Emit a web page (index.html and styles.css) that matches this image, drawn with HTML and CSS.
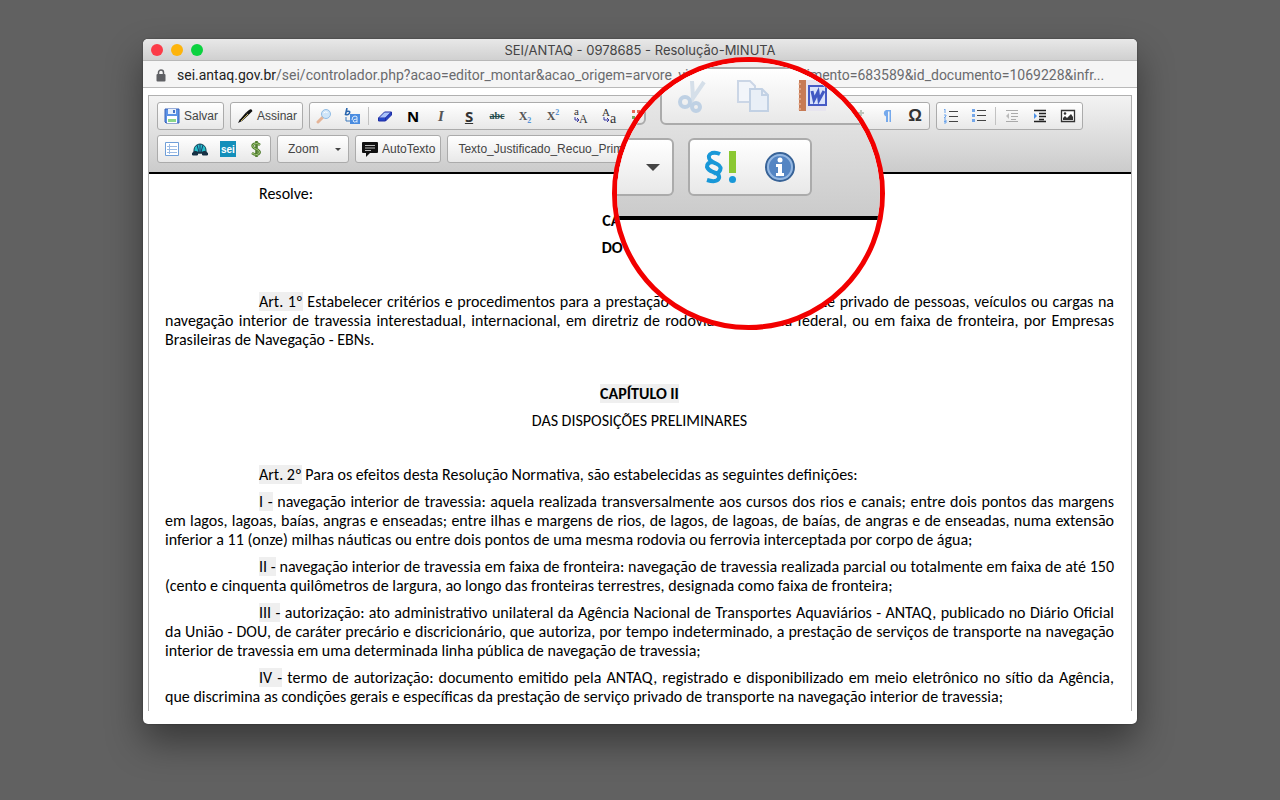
FILE: index.html
```html
<!DOCTYPE html>
<html lang="pt-BR">
<head>
<meta charset="utf-8">
<title>SEI/ANTAQ - 0978685 - Resolução-MINUTA</title>
<link rel="stylesheet" href="styles.css">
</head>
<body>
<main class="window">
  <header class="titlebar">
    <div class="lights"><span class="light red"></span><span class="light yellow"></span><span class="light green"></span></div>
    <h1 class="title">SEI/ANTAQ - 0978685 - Resolução-MINUTA</h1>
  </header>
  <div class="address">
    <svg class="lock" width="10" height="13" viewBox="0 0 10 13"><path d="M2.500 6V3.500a2.500 2.500 0 0 1 5 0V6" fill="none" stroke="#5f6064" stroke-width="1.500"/><rect x="0.500" y="5" width="9" height="7.500" rx="1" fill="#5f6064"/></svg>
    <span class="url"><span class="host">sei.antaq.gov.br</span>/sei/controlador.php?acao=editor_montar&amp;acao_origem=arvore_visualizar&amp;id_procedimento=683589&amp;id_documento=1069228&amp;infr...</span>
  </div>
  <div class="editor">
    <div class="toolbar">
      <div class="tools">
        <button class="group labelled" type="button"><svg width="16" height="16" viewBox="0 0 16 16"><path d="M1 1h14v14H2l-1-1z" fill="#5c93e6" stroke="#3a62b8"/><path d="M4 1h8v5H4z" fill="#e9f1fd"/><path d="M9 2h2v3H9z" fill="#4673c8"/><path d="M3 8h10v7H3z" fill="#fff"/><path d="M4 11h8v3H4z" fill="#8bd68b"/></svg>Salvar</button>
        <button class="group labelled" type="button"><svg width="16" height="16" viewBox="0 0 16 16"><path d="M1 15l2-4 2 2zM3 11.500l6-7L11.500 7 5 13z" fill="#111"/><path d="M9 4.500L12 2q2-1.500 3 0t-.5 2L11.500 7z" fill="#111"/><path d="M4 13L11 6" stroke="#c2ad58"/></svg>Assinar</button>
        <div class="group">
          <button class="tool" type="button" aria-label="Localizar"><svg width="16" height="16" viewBox="0 0 16 16"><path d="M2 14l5-5" stroke="#e5b497" stroke-width="3" stroke-linecap="round"/><circle cx="10" cy="6" r="4.500" fill="#cfe5f8" stroke="#91bde5"/><path d="M7.500 5q2-2 4-.5" stroke="#fff" fill="none"/></svg></button>
          <button class="tool" type="button" aria-label="Substituir"><svg width="16" height="16" viewBox="0 0 16 16"><path d="M3 0L1.500 6.500q3 1 4-1.500T2.500 3.500" fill="none" stroke="#2865ae" stroke-width="1.600"/><path d="M2 9v4h4" fill="none" stroke="#3b78bd"/><path d="M6 6h10v10H6z" fill="#4a8ce0"/><path d="M8 12q0-4 3-4t2 3v3.500M13 11q-4 0-4 2t4 .5" fill="none" stroke="#d9e9fc"/></svg></button>
          <span class="rule"></span>
          <button class="tool" type="button" aria-label="Remover formatação"><svg width="16" height="16" viewBox="0 0 16 16"><path d="M1.500 10l6-6h7l-6 6z" fill="#a9c3fa" stroke="#202ea5"/><path d="M1.500 10v3h7v-3M8.500 13l6-6V4l-6 6z" fill="#2447c8" stroke="#202ea5"/></svg></button>
          <button class="tool bold" type="button" aria-label="Negrito">N</button>
          <button class="tool italic" type="button" aria-label="Itálico">I</button>
          <button class="tool underline" type="button" aria-label="Sublinhado">S</button>
          <button class="tool strike" type="button" aria-label="Tachado">abc</button>
          <button class="tool script" type="button" aria-label="Subscrito"><span>X<sub>2</sub></span></button>
          <button class="tool script" type="button" aria-label="Sobrescrito"><span>X<sup>2</sup></span></button>
          <button class="tool" type="button" aria-label="Maiúsculas"><svg class="letters" width="16" height="16" viewBox="0 0 16 16"><g fill="#333"><text x="1" y="7" font-size="11">a</text><text x="6" y="15" font-size="12">A</text></g><path d="M2 9v3h4M4 10l2 2-2 2" fill="none" stroke="#3535a0"/></svg></button>
          <button class="tool" type="button" aria-label="Minúsculas"><svg class="letters" width="16" height="16" viewBox="0 0 16 16"><g fill="#333"><text x="1" y="8" font-size="11">A</text><text x="9" y="15" font-size="14">a</text></g><path d="M3 9v3h5M6 10l2 2-2 2" fill="none" stroke="#3535a0"/></svg></button>
          <button class="tool" type="button" aria-label="Cor"><svg width="16" height="16" viewBox="0 0 16 16"><path d="M3 2h3v3H3zM8 2h3v3H8z" fill="#e76855"/><path d="M3 8h3v3H3z" fill="#72a55c"/></svg></button>
        </div>
        <div class="group wide">
          <button class="tool" type="button" aria-label="Limpar"><svg width="16" height="16" viewBox="0 0 16 16"><path d="M10 2v6M7 5h6" stroke="#bcc5bb" stroke-width="2"/></svg></button>
          <button class="tool" type="button" aria-label="Mostrar blocos"><svg width="16" height="16" viewBox="0 0 16 16"><path d="M7 8.500A3.500 3.500 0 0 1 7 2h5v12h-1.500V3.500H9V14H7z" fill="#75a9ec"/></svg></button>
          <button class="tool omega" type="button" aria-label="Símbolo">Ω</button>
        </div>
        <div class="group">
          <button class="tool" type="button" aria-label="Lista numerada"><svg width="16" height="16" viewBox="0 0 16 16"><path d="M6 3.500h9M6 8.500h9M6 13.500h9" stroke="#444"/><path d="M1 2l1-1v4M1 7h2v1L1 10h2M1 12h2v3H1M1 13.500h2" fill="none" stroke="#6ba4ec"/></svg></button>
          <button class="tool" type="button" aria-label="Lista"><svg width="16" height="16" viewBox="0 0 16 16"><path d="M6 2.500h9M6 7.500h9M6 12.500h9" stroke="#444"/><path d="M1 1h3v3H1zM1 6h3v3H1zM1 11h3v3H1z" fill="#74a7ea"/></svg></button>
          <span class="rule"></span>
          <button class="tool" type="button" aria-label="Diminuir recuo"><svg width="16" height="16" viewBox="0 0 16 16"><path d="M2 2.500h12M7 5.500h7M7 8.500h7M7 11.500h5M2 13.500h12" stroke="#aaa"/><path d="M5 5v6L2 8z" fill="#bbb"/></svg></button>
          <button class="tool" type="button" aria-label="Aumentar recuo"><svg width="16" height="16" viewBox="0 0 16 16"><path d="M2 2.500h12M7 5.500h7M7 8.500h7M7 11.500h5M2 13.500h12" stroke="#222" stroke-width="1.300"/><path d="M2 5v6l3-3z" fill="#4b8fe5"/></svg></button>
          <button class="tool" type="button" aria-label="Imagem"><svg width="16" height="16" viewBox="0 0 16 16"><path d="M1.500 2.500h13v11h-13z" fill="#fff" stroke="#333" stroke-width="1.300"/><circle cx="5" cy="5.500" r="1.300" fill="#333"/><path d="M3 12V10l2-2 2 2 4-4 2 3v3z" fill="#333"/></svg></button>
        </div>
      </div>
      <div class="tools">
        <div class="group">
          <button class="tool" type="button" aria-label="Tabela"><svg width="16" height="16" viewBox="0 0 16 16"><path d="M1.500 1.500h13v13h-13z" fill="#fff" stroke="#6f9ed8"/><path d="M3 5.500h10M3 8.500h10M3 11.500h10M5.500 3v10" stroke="#9bbbe4"/></svg></button>
          <button class="tool" type="button" aria-label="Link"><svg width="16" height="16" viewBox="0 0 16 16"><path d="M2 9a6 6 0 0 1 12 0v3H2z" fill="#25bfca" stroke="#104556"/><path d="M8 3v7M5 4l2 7M11 4l-2 7" stroke="#153d6c"/><path d="M.5 14v-2q2-3 5-1h5q3-2 5 1v2h-5v-2h-5v2z" fill="#163044" stroke="#163044"/></svg></button>
          <button class="tool" type="button" aria-label="Link SEI"><svg class="sei" width="16" height="16" viewBox="0 0 16 16"><path fill="#138fba" d="M0 0h16v16H0z"/><text x="1" y="12" fill="#fff" font-size="10">sei</text></svg></button>
          <button class="tool" type="button" aria-label="Valor"><svg width="16" height="16" viewBox="0 0 16 16"><path d="M12 4Q9 1.500 6 3T6 7l4 2q3 2 .5 4T4 12M8.500 0v16" fill="none" stroke="#527d30" stroke-width="2.600"/><path d="M12 4Q9 1.500 6 3T6 7l4 2q3 2 .5 4T4 12" fill="none" stroke="#a0c878"/></svg></button>
        </div>
        <label class="group picker"><select class="choice" aria-label="Zoom"><option>Zoom</option></select></label>
        <button class="group labelled" type="button"><svg width="16" height="16" viewBox="0 0 16 16"><path d="M1 1h14q1 0 1 1v9q0 1-1 1H8l-4 4v-4H1q-1 0-1-1V2q0-1 1-1z" fill="#111"/><path d="M3 4.500h10M3 7h10M3 9.500h6" stroke="#bbb"/></svg>AutoTexto</button>
        <label class="group picker style"><select class="choice" aria-label="Estilo"><option>Texto_Justificado_Recuo_Primeira_Linha</option></select></label>
      </div>
    </div>
    <article class="document">
      <p class="indent">Resolve:</p>
      <p class="center"><b>CAPÍTULO I</b></p>
      <p class="center"><b>DO OBJETO</b></p>
      <p class="blank"></p>
      <p class="indent"><span class="mark">Art. 1º</span> Estabelecer critérios e procedimentos para a prestação do serviço de transporte privado de pessoas, veículos ou cargas na navegação interior de travessia interestadual, internacional, em diretriz de rodovia ou ferrovia federal, ou em faixa de fronteira, por Empresas Brasileiras de Navegação - EBNs.</p>
      <p class="blank"></p>
      <p class="center"><b class="mark">CAPÍTULO II</b></p>
      <p class="center">DAS DISPOSIÇÕES PRELIMINARES</p>
      <p class="blank"></p>
      <p class="indent"><span class="mark">Art. 2º</span> Para os efeitos desta Resolução Normativa, são estabelecidas as seguintes definições:</p>
      <p class="indent"><span class="mark">I -</span> navegação interior de travessia: aquela realizada transversalmente aos cursos dos rios e canais; entre dois pontos das margens em lagos, lagoas, baías, angras e enseadas; entre ilhas e margens de rios, de lagos, de lagoas, de baías, de angras e de enseadas, numa extensão inferior a 11 (onze) milhas náuticas ou entre dois pontos de uma mesma rodovia ou ferrovia interceptada por corpo de água;</p>
      <p class="indent"><span class="mark">II -</span> navegação interior de travessia em faixa de fronteira: navegação de travessia realizada parcial ou totalmente em faixa de até 150 (cento e cinquenta quilômetros de largura, ao longo das fronteiras terrestres, designada como faixa de fronteira;</p>
      <p class="indent"><span class="mark">III -</span> autorização: ato administrativo unilateral da Agência Nacional de Transportes Aquaviários - ANTAQ, publicado no Diário Oficial da União - DOU, de caráter precário e discricionário, que autoriza, por tempo indeterminado, a prestação de serviços de transporte na navegação interior de travessia em uma determinada linha pública de navegação de travessia;</p>
      <p class="indent"><span class="mark">IV -</span> termo de autorização: documento emitido pela ANTAQ, registrado e disponibilizado em meio eletrônico no sítio da Agência, que discrimina as condições gerais e específicas da prestação de serviço privado de transporte na navegação interior de travessia;</p>
    </article>
  </div>
  <div class="lens">
    <div class="lens-bar">
      <div class="lens-row">
        <div class="lens-group tail"><svg width="30" height="30" viewBox="0 0 30 30"><path d="M13 11h4v4h-4zM19 11h4v4h-4z" fill="#ee7364"/><path d="M13 19h4v4h-4z" fill="#86a97d"/></svg></div>
        <div class="lens-group clipboard">
          <svg width="34" height="34" viewBox="0 0 34 34"><path d="M16 2l1 17M28 3L15 22" fill="none" stroke="#d5dfe9" stroke-width="4"/><circle cx="9" cy="23" r="5" fill="none" stroke="#bfd1e4" stroke-width="4"/><circle cx="20" cy="28" r="4" fill="none" stroke="#bfd1e4" stroke-width="4"/></svg>
          <svg width="34" height="34" viewBox="0 0 34 34"><path d="M2 2h12l5 5v16H2z" fill="#f2f5fa" stroke="#cbd6e6" stroke-width="2"/><path d="M14 10h12l6 6v16H14z" fill="#e9eff7" stroke="#c2d1e4" stroke-width="2"/><path d="M26 10v6h6" fill="none" stroke="#c2d1e4" stroke-width="2"/></svg>
          <svg width="34" height="34" viewBox="0 0 34 34"><path d="M3 1h27v31H3z" fill="#e7e5ef"/><path d="M3 1h7v31H3z" fill="#c77b55"/><path d="M2 5h3M2 10h3M2 15h3M2 20h3M2 25h3M2 30h3" stroke="#f2c6ad"/><path d="M13 7h17v19H13z" fill="#d9e3fb" stroke="#465bc5" stroke-width="2"/><path d="M16 12l2 9 4-8 1 8 5-9" fill="none" stroke="#4059c3" stroke-width="3"/></svg>
        </div>
      </div>
      <div class="lens-row">
        <div class="lens-group arrow"><span class="triangle"></span></div>
        <div class="lens-group legis">
          <svg width="34" height="36" viewBox="0 0 34 36"><path d="M16 5Q12 3 8 4Q3 6 6 11Q8 13 13 15Q19 18 15 23Q13 25 10 24M9 13Q3 13 3 18Q4 21 9 23Q16 25 15 29Q13 34 3 31" fill="none" stroke="#1998d8" stroke-width="4"/><path d="M25 2h7v22h-7z" fill="#8bc832"/><circle cx="28.500" cy="30.500" r="3.500" fill="#1998d8"/></svg>
          <svg width="32" height="32" viewBox="0 0 32 32"><circle cx="16" cy="16" r="14" fill="#5485c3" stroke="#386397" stroke-width="2"/><circle cx="16" cy="16" r="12" fill="none" stroke="#95b8e2" stroke-width="2"/><circle cx="16" cy="9" r="2.500" fill="#fff"/><path d="M12 13h6v9h2v3h-8v-3h2v-6h-2z" fill="#fff"/></svg>
        </div>
      </div>
    </div>
  </div>
</main>
</body>
</html>
```
FILE: styles.css
```css
* { box-sizing: border-box; }
body { margin: 0; min-height: 100vh; padding: 39px 143px 76px; background: #616161; font-family: "Liberation Sans", Arial, sans-serif; color: #000; }
.window { position: relative; background: #fff; border-radius: 5px; padding-bottom: 13px; box-shadow: 0 18px 36px rgba(0, 0, 0, .42), 0 0 2px rgba(0, 0, 0, .4); }
.titlebar { display: grid; grid-template-columns: 1fr auto 1fr; align-items: center; height: 22px; padding: 0 8px; background: linear-gradient(#e8e8e8, #d0d0d0); border-bottom: 1px solid #b8b8b8; border-radius: 5px 5px 0 0; }
.lights { display: flex; gap: 8px; }
.light { width: 12px; height: 12px; border-radius: 50%; }
.red { background: #fc3b48; }
.yellow { background: #fdb40b; }
.green { background: #0bd23f; }
.title { grid-column: 2; margin: 0; font: 400 13px/20px Inter, sans-serif; color: #444; }
.address { display: flex; align-items: center; gap: 11px; height: 27px; padding: 2px 13px 0; background: #f5f5f5; border-bottom: 1px solid #b9b9b9; }
.lock { flex: none; }
.url { font: 14px/20px Roboto, sans-serif; color: #6a6b6e; white-space: nowrap; overflow: hidden; }
.host { color: #222; }
.editor { margin: 7px 5px 0; border: 1px solid #b0b0b0; border-bottom: 0; }
.toolbar { display: flex; flex-direction: column; gap: 5px; padding: 6px 8px 9px; background: linear-gradient(#f3f3f3, #cbcbcb); border-bottom: 2px solid #000; }
.tools { display: flex; gap: 6px; }
.group { display: flex; flex: none; align-items: center; gap: 4px; height: 28px; padding: 0 2px; border: 1px solid #ababab; border-radius: 3px; background: linear-gradient(#fff, #e8e8e8); }
.wide { flex: 0 1 272px; justify-content: flex-end; }
.labelled { padding: 0 5px 0 6px; font: 12px/16px "Liberation Sans", Arial, sans-serif; color: #444; }
.tool { display: flex; align-items: center; justify-content: center; width: 24px; height: 24px; padding: 0; border: 0; background: none; color: #222; }
.letters { font-family: "Liberation Serif", serif; overflow: visible; }
.sei { font-family: "Liberation Sans", sans-serif; font-weight: 700; }
.rule { width: 1px; height: 18px; background: #c2c2c2; }
.bold { font: 700 15px/20px "Open Sans", sans-serif; color: #000; }
.italic { font: italic 700 15px/20px "Liberation Serif", serif; color: #555; }
.underline { font: 700 15px/18px "Open Sans", sans-serif; color: #333; text-decoration: underline; }
.strike { font: 700 10px/16px "Liberation Serif", serif; color: #244c4c; text-decoration: line-through; }
.script { font: 700 12px/16px "Liberation Serif", serif; color: #555; }
.script sub, .script sup { font-size: 8px; line-height: 1px; color: #5593d6; }
.omega { font: 700 17px/20px "Liberation Sans", sans-serif; color: #333; }
.picker { position: relative; width: 72px; padding: 0; }
.picker::after { content: ""; position: absolute; right: 7px; top: 12px; border: 3px solid transparent; border-top-color: #444; pointer-events: none; }
.style { width: 220px; }
.choice { width: 100%; height: 26px; padding: 0 20px 0 10px; border: 0; appearance: none; background: none; font: 12px/16px "Liberation Sans", Arial, sans-serif; color: #444; }
.document { padding: 10px 17px 5px 16px; font: 16px/19px Carlito, Calibri, Lato, sans-serif; }
.document p { margin: 0 0 8px; text-align: justify; }
.document p:last-child { margin-bottom: 0; }
.document .indent { text-indent: 94px; }
.document .center { text-align: center; }
.blank { height: 19px; }
.mark { background: #efefef; }
.lens { position: absolute; left: calc(50% - 28px); top: 18px; width: 273px; height: 273px; border: 5px solid #f20000; border-radius: 50%; overflow: hidden; background: #fff; }
.lens-bar { display: flex; flex-direction: column; gap: 13px; padding: 5px 0 20px; background: linear-gradient(#f0f0f0, #cbcbcb); border-bottom: 4px solid #000; }
.lens-row { display: flex; gap: 14px; }
.lens-group { display: flex; flex: none; align-items: center; height: 58px; border: 2px solid #ababab; border-radius: 6px; background: linear-gradient(#fff, #e8e8e8); }
.tail { width: 29px; justify-content: flex-end; }
.clipboard { width: 320px; padding: 0 14px; gap: 26px; }
.arrow { width: 57px; justify-content: flex-end; padding-right: 12px; border-left: 0; border-radius: 0 6px 6px 0; }
.triangle { border: 7px solid transparent; border-top-color: #444; border-bottom: 0; }
.legis { width: 124px; padding: 0 14px; gap: 26px; }
```
